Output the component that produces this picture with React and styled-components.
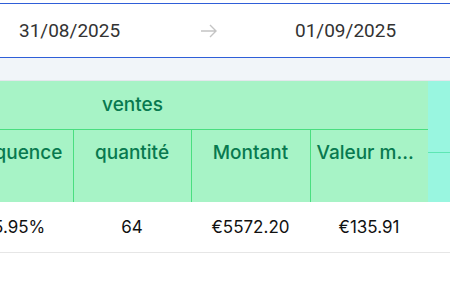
import React from "react"
import styled, { createGlobalStyle } from "styled-components"

const GlobalStyle = createGlobalStyle`
    *{
        margin: 0;
        padding: 0;
        box-sizing: border-box;
    }
    body{
        background: #ffffff;
        font-family: Inter, sans-serif;
        overflow: hidden;
    }
`

const Page = styled.div`
    width: 450px;
    padding-top: 3px;
`

const Picker = styled.div`
    height: 55px;
    display: flex;
    align-items: center;
    border-top: 1px solid #2f5fd8;
    border-bottom: 1px solid #2f5fd8;
    background: #ffffff;
`

const DateText = styled.span`
    font-family: Roboto, sans-serif;
    font-size: 19px;
    color: #333333;
    width: ${p => p.$w}px;
    padding-left: ${p => p.$pl}px;
`

const Arrow = styled.span`
    display: flex;
    width: 95px;
`

const Band = styled.div`
    height: 23px;
    background: #f1f5f9;
    border-bottom: 1px solid #e4e7ec;
`

const Viewport = styled.div`
    overflow: hidden;
    width: 450px;
`

const Table = styled.table`
    border-collapse: collapse;
    table-layout: fixed;
    margin-left: -163px;
    width: 638px;
`

const Head = styled.th`
    background: #a7f3c6;
    color: #08794f;
    font-weight: 500;
    font-size: 19px;
    text-align: center;
    vertical-align: ${p => (p.$top ? "top" : "middle")};
    height: ${p => p.$h}px;
    padding: ${p => (p.$top ? "11px 6px 0" : "0 6px")};
    white-space: nowrap;
    overflow: hidden;
    text-overflow: ellipsis;
    border-left: ${p => (p.$edge ? "1px solid #4ade80" : "none")};
    border-bottom: ${p => (p.$line ? "1px solid #4ade80" : "none")};
`

const SideHead = styled.th`
    background: #99f6e0;
    vertical-align: top;
    padding: 0;
`

const SideTop = styled.div`
    height: 72px;
    border-bottom: 1px solid #5ee6b4;
`

const Cell = styled.td`
    height: 50px;
    font-size: 17px;
    color: #111111;
    text-align: center;
    white-space: nowrap;
    border-bottom: 1px solid #e6e6e6;
`

const ArrowIcon = () => (
    <svg width="18" height="14" viewBox="0 0 18 14" fill="none" stroke="#c4c4c4" strokeWidth="1.4">
        <path d="M1 7h15M10 1l6 6-6 6" />
    </svg>
)

const App = () =>
    <>
        <GlobalStyle/>
        <Page>
            <Picker>
                <DateText $w={200} $pl={19}>31/08/2025</DateText>
                <Arrow><ArrowIcon/></Arrow>
                <DateText $w={155} $pl={0}>01/09/2025</DateText>
            </Picker>
            <Band/>
            <Viewport>
                <Table>
                    <colgroup>
                        <col style={{ width: 118 }}/>
                        <col style={{ width: 118 }}/>
                        <col style={{ width: 118 }}/>
                        <col style={{ width: 119 }}/>
                        <col style={{ width: 118 }}/>
                        <col style={{ width: 47 }}/>
                    </colgroup>
                    <thead>
                        <tr>
                            <Head colSpan={5} $h={48} $line>ventes</Head>
                            <SideHead rowSpan={2}><SideTop/></SideHead>
                        </tr>
                        <tr>
                            <Head $top $h={73}>Nombre</Head>
                            <Head $top $h={73} $edge>Fréquence</Head>
                            <Head $top $h={73} $edge>quantité</Head>
                            <Head $top $h={73} $edge>Montant</Head>
                            <Head $top $h={73} $edge>Valeur moyenne</Head>
                        </tr>
                    </thead>
                    <tbody>
                        <tr>
                            <Cell>41</Cell>
                            <Cell>55.95%</Cell>
                            <Cell>64</Cell>
                            <Cell>€5572.20</Cell>
                            <Cell>€135.91</Cell>
                            <Cell></Cell>
                        </tr>
                    </tbody>
                </Table>
            </Viewport>
        </Page>
    </>

export default App
